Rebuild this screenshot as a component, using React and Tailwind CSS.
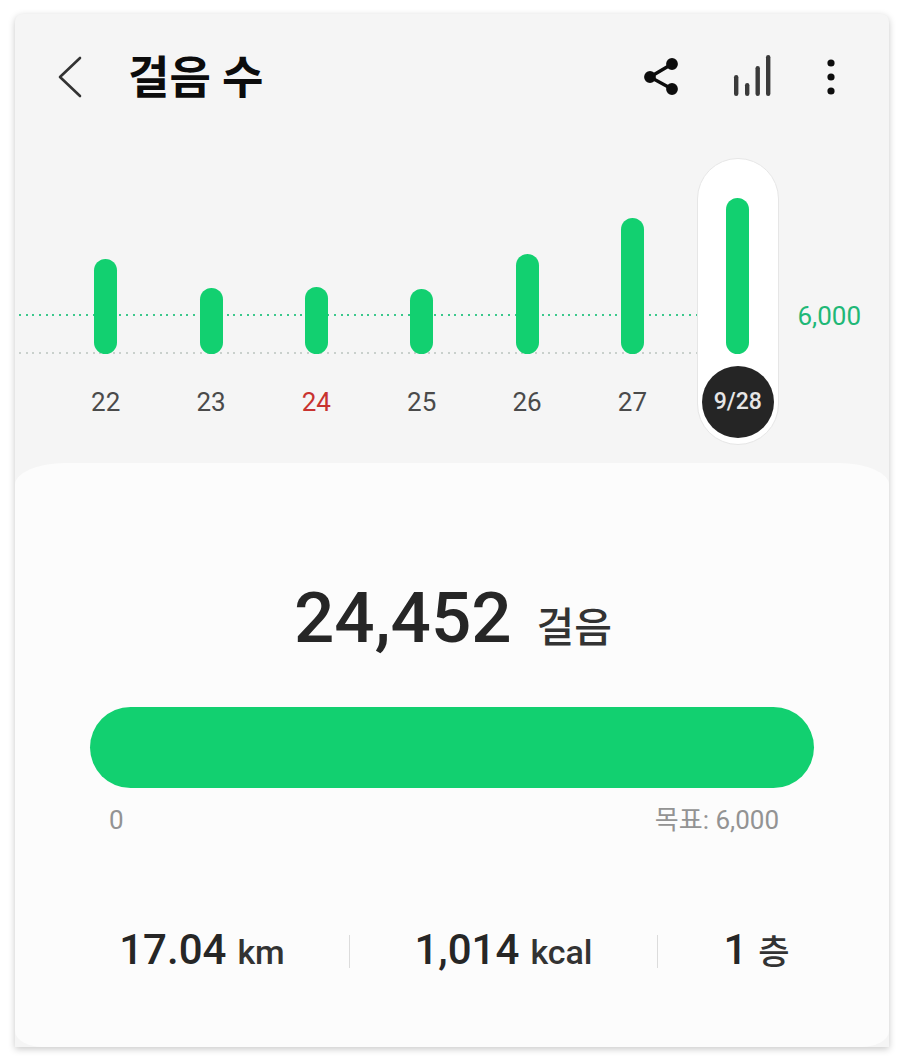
const ROBOTO = "font-['Roboto','Noto_Sans_CJK_KR',sans-serif]";

const days = [
  { label: "22", h: 95 },
  { label: "23", h: 66 },
  { label: "24", h: 67, red: true },
  { label: "25", h: 65 },
  { label: "26", h: 100 },
  { label: "27", h: 136 },
  { label: "9/28", h: 156, active: true },
];

function DayColumn({ day }) {
  return (
    <div className="flex justify-center">
      <div
        className={
          day.active
            ? "relative flex h-[287px] w-[82px] flex-col items-center rounded-full border border-[#e6e6e6] bg-white"
            : "relative flex h-[287px] w-[82px] flex-col items-center border border-transparent"
        }
      >
        <div className="flex h-[195px] w-full flex-col items-center justify-end">
          <div className="w-[23px] rounded-full bg-[#12d070]" style={{ height: day.h }} />
        </div>
        <div className="mt-3 flex h-[72px] w-full items-center justify-center">
          {day.active ? (
            <div className="flex h-[72px] w-[72px] items-center justify-center rounded-full bg-[#252525] text-[23px] font-medium text-[#e6e6e6]">
              {day.label}
            </div>
          ) : (
            <span className={day.red ? "text-[26px] text-[#c8332f]" : "text-[26px] text-[#4a4a4a]"}>{day.label}</span>
          )}
        </div>
      </div>
    </div>
  );
}

function Stat({ value, unit, className }) {
  return (
    <div className={`flex items-baseline justify-center gap-[11px] ${className}`}>
      <span className="text-[42px] leading-[48px] font-medium text-[#262626]">{value}</span>
      <span className="text-[34px] leading-[48px] font-medium text-[#333333]">{unit}</span>
    </div>
  );
}

export default function App() {
  return (
    <div className={`h-[1062px] w-[904px] bg-white pt-[14px] pl-[15px] ${ROBOTO}`}>
      <div className="relative flex h-[1033px] w-[874px] flex-col overflow-hidden rounded-t-lg bg-[#f5f5f5] shadow-[0_2px_7px_rgba(0,0,0,0.22)]">
        <header className="flex h-[126px] shrink-0 items-center pl-[43px]">
          <svg width="24" height="44" viewBox="0 0 24 44" fill="none" stroke="#333333" strokeWidth="2.6" strokeLinecap="round" strokeLinejoin="round">
            <path d="M22 3 L2 22 L22 41" />
          </svg>
          <h1 className="mt-[2px] ml-[46px] text-[45px] leading-none font-bold text-[#0c0c0c]">걸음 수</h1>
          <div className="ml-auto flex items-center pr-[53px]">
            <svg width="36" height="40" viewBox="0 0 36 40" fill="#0d0d0d" stroke="#0d0d0d" strokeWidth="3.4">
              <path d="M28 7 L6 20 L28 32" fill="none" />
              <circle cx="28" cy="7" r="4.2" />
              <circle cx="6" cy="20" r="4.2" />
              <circle cx="28" cy="32" r="4.2" />
            </svg>
            <svg className="ml-[53px]" width="40" height="44" viewBox="0 0 40 44" fill="#3a3a3a">
              <rect x="1" y="20" width="4.4" height="21" rx="2.2" />
              <rect x="12" y="28" width="4.4" height="13" rx="2.2" />
              <rect x="22.5" y="11" width="4.4" height="30" rx="2.2" />
              <rect x="33" y="0" width="4.4" height="41" rx="2.2" />
            </svg>
            <svg className="ml-[53px]" width="10" height="40" viewBox="0 0 10 40" fill="#0d0d0d">
              <circle cx="5" cy="6" r="3.6" />
              <circle cx="5" cy="20" r="3.6" />
              <circle cx="5" cy="34" r="3.6" />
            </svg>
          </div>
        </header>

        <section className="relative mt-[18px] flex h-[305px] shrink-0 pl-[38px]">
          <div className="absolute top-[156px] left-[4px] h-[2px] w-[678px] bg-[repeating-linear-gradient(90deg,#3cc88c_0,#3cc88c_2px,transparent_2px,transparent_6.7px)]" />
          <div className="absolute top-[194px] left-[4px] h-[2px] w-[678px] bg-[repeating-linear-gradient(90deg,#c9d0cc_0,#c9d0cc_2px,transparent_2px,transparent_6.7px)]" />
          <div className="relative grid h-[287px] w-[737.5px] grid-cols-7">
            {days.map((d) => (
              <DayColumn key={d.label} day={d} />
            ))}
          </div>
          <div className="relative ml-[7px] pt-[143px] text-[26px] leading-[30px] text-[#1fb877]">6,000</div>
        </section>

        <section className="flex min-h-0 flex-1 flex-col [border-radius:50px_50px_28px_28px/22px_22px_16px_16px] bg-[#fcfcfc]">
          <div className="mt-[113px] flex items-baseline justify-center pl-[2px]">
            <span className="text-[71px] leading-[84px] font-medium text-[#262626]">24,452</span>
            <span className="ml-[25px] text-[41px] leading-[84px] font-medium text-[#333333]">걸음</span>
          </div>
          <div className="mx-[75px] mt-[37px] h-[81px] rounded-full bg-[#12d070]" />
          <div className="mt-[16px] flex justify-between pr-[110px] pl-[94px] text-[26px] leading-[32px] text-[#939393]">
            <span>0</span>
            <span>목표: 6,000</span>
          </div>
          <div className="mt-[90px] flex items-center pr-[34px] pl-[40px]">
            <Stat value="17.04" unit="km" className="w-[294px]" />
            <div className="h-[33px] w-px bg-[#dcdcdc]" />
            <Stat value="1,014" unit="kcal" className="w-[307px]" />
            <div className="h-[33px] w-px bg-[#dcdcdc]" />
            <Stat value="1" unit="층" className="flex-1" />
          </div>
        </section>
      </div>
    </div>
  );
}
